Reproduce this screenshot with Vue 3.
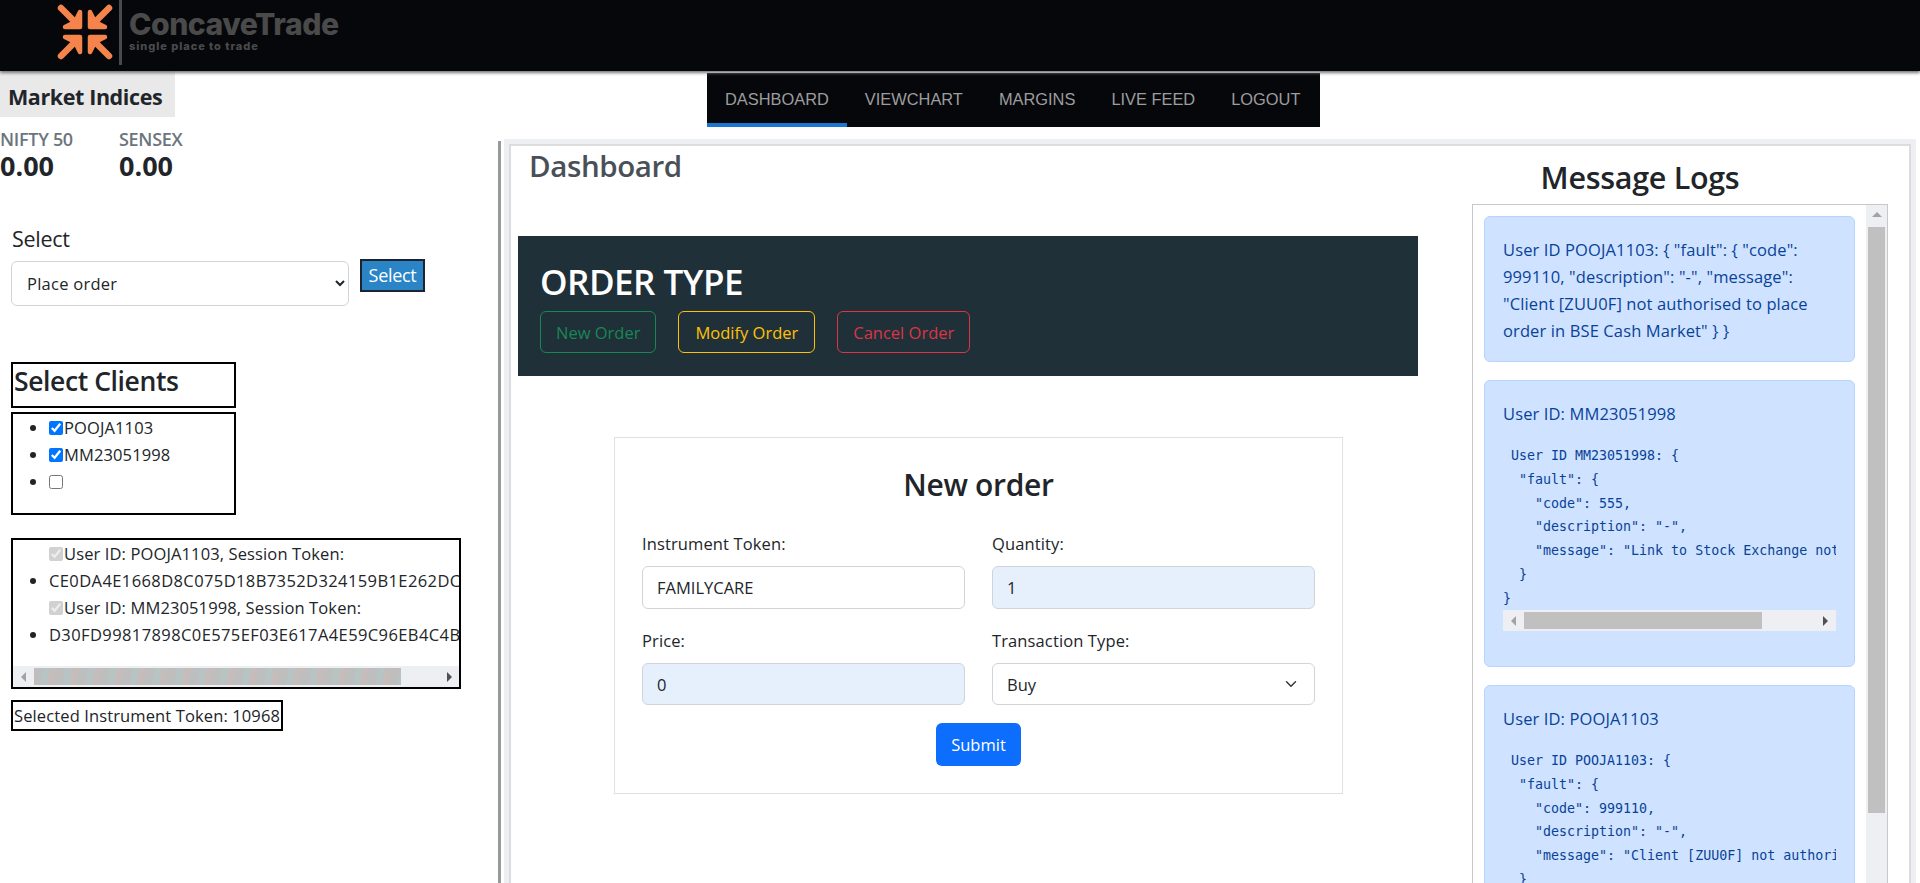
<template>
  <div class="page">
    <header class="topbar">
      <svg class="logo" width="56" height="56" viewBox="-28 -28 56 56">
        <g v-for="flip in arrowFlips" :key="flip" :transform="flip">
          <line x1="-24" y1="-24" x2="-11" y2="-11" stroke="#f5844c" stroke-width="6.5" stroke-linecap="round" />
          <path d="M-5 -20 L-5 -5 L-20 -5 L-10 -10 Z" fill="#f5844c" stroke="#f5844c" stroke-width="4.5" stroke-linejoin="round" />
        </g>
      </svg>
      <div class="logo-rule"></div>
      <div class="brand">
        <div class="brand-name">ConcaveTrade</div>
        <div class="brand-tag">single place to trade</div>
      </div>
    </header>

    <div class="content">
      <aside class="sidebar">
        <h2 class="indices-title">Market Indices</h2>
        <div class="indices">
          <div v-for="index in indices" :key="index.name" class="index">
            <div class="index-name">{{ index.name }}</div>
            <div class="index-value">{{ index.value }}</div>
          </div>
        </div>

        <div class="select-label">Select</div>
        <div class="select-row">
          <select class="action-select">
            <option>Place order</option>
          </select>
          <button class="select-btn">Select</button>
        </div>

        <h3 class="clients-title">Select Clients</h3>
        <ul class="clients">
          <li v-for="client in clients" :key="client.id">
            <input type="checkbox" :checked="client.checked" />{{ client.id }}
          </li>
        </ul>

        <div class="sessions">
          <div class="sessions-view">
            <ul>
              <template v-for="session in sessions" :key="session.id">
                <li class="session-user">
                  <input type="checkbox" checked disabled />User ID: {{ session.id }}, Session Token:
                </li>
                <li class="session-token">{{ session.token }}</li>
              </template>
            </ul>
          </div>
          <div class="hbar">
            <span class="arrow-left dim"></span>
            <div class="hbar-thumb noisy"></div>
            <span class="arrow-right"></span>
          </div>
        </div>

        <div class="selected-token">Selected Instrument Token: 10968</div>
      </aside>

      <main class="right">
        <nav class="tabs">
          <a v-for="(tab, i) in tabs" :key="tab" :class="{ active: i === 0 }">{{ tab }}</a>
        </nav>

        <div class="panel-wrap">
          <section class="panel">
            <div class="orders">
              <h1 class="dash-title">Dashboard</h1>
              <div class="order-type">
                <h2>ORDER TYPE</h2>
                <div class="order-btns">
                  <button class="new">New Order</button>
                  <button class="modify">Modify Order</button>
                  <button class="cancel">Cancel Order</button>
                </div>
              </div>

              <form class="order-form" @submit.prevent>
                <h3>New order</h3>
                <div class="fields">
                  <div class="field">
                    <label>Instrument Token:</label>
                    <input value="FAMILYCARE" />
                  </div>
                  <div class="field">
                    <label>Quantity:</label>
                    <input class="filled" value="1" />
                  </div>
                  <div class="field short">
                    <label>Price:</label>
                    <input class="filled" value="0" />
                  </div>
                  <div class="field short">
                    <label>Transaction Type:</label>
                    <select class="type-select">
                      <option>Buy</option>
                    </select>
                  </div>
                </div>
                <button class="submit">Submit</button>
              </form>
            </div>

            <div class="logs">
              <h2 class="logs-title">Message Logs</h2>
              <div class="logs-box">
                <div class="logs-view">
                  <div class="alert first">
                    User ID POOJA1103: { "fault": { "code": 999110, "description": "-", "message": "Client [ZUU0F] not authorised to place order in BSE Cash Market" } }
                  </div>
                  <div v-for="log in logs" :key="log.id" class="alert">
                    <div class="alert-user">User ID: {{ log.id }}</div>
                    <pre>{{ log.body }}</pre>
                    <div class="hbar log-bar">
                      <span class="arrow-left dim"></span>
                      <div class="hbar-thumb"></div>
                      <span class="arrow-right"></span>
                    </div>
                  </div>
                </div>
                <div class="vbar">
                  <span class="arrow-up"></span>
                  <div class="vbar-thumb"></div>
                </div>
              </div>
            </div>
          </section>
        </div>
      </main>
    </div>
  </div>
</template>

<script setup>
const arrowFlips = [
  "scale(1 1)",
  "scale(-1 1)",
  "scale(1 -1)",
  "scale(-1 -1)",
];

const indices = [
  { name: "NIFTY 50", value: "0.00" },
  { name: "SENSEX", value: "0.00" },
];

const clients = [
  { id: "POOJA1103", checked: true },
  { id: "MM23051998", checked: true },
  { id: "", checked: false },
];

const sessions = [
  { id: "POOJA1103", token: "CE0DA4E1668D8C075D18B7352D324159B1E262DC7A90F4E1B6C3D2" },
  { id: "MM23051998", token: "D30FD99817898C0E575EF03E617A4E59C96EB4C4B07D21E6A4F9C1" },
];

const tabs = ["Dashboard", "ViewChart", "Margins", "Live Feed", "Logout"];

function logBody(id, code, message) {
  return ` User ID ${id}: {
  "fault": {
    "code": ${code},
    "description": "-",
    "message": "${message}"
  }
}`;
}

const logs = [
  { id: "MM23051998", body: logBody("MM23051998", 555, "Link to Stock Exchange not available") },
  { id: "POOJA1103", body: logBody("POOJA1103", 999110, "Client [ZUU0F] not authorised to place order") },
];
</script>

<style>
html,
body {
  margin: 0;
  overflow: hidden;
  background: #fff;
}
</style>

<style scoped>
.page {
  height: 883px;
  overflow: hidden;
  font-family: "Open Sans", "Noto Sans", sans-serif;
  font-size: 16.5px;
  letter-spacing: 0.12px;
  line-height: 27px;
  color: #212529;
}

h1,
h2,
h3 {
  margin: 0;
}

/* header */
.topbar {
  height: 71px;
  background: #05070b;
  box-shadow: 0 2px 3px #777;
  display: flex;
  position: relative;
  z-index: 2;
}

.logo {
  margin: 4px 0 0 57px;
}

.logo-rule {
  width: 3px;
  height: 65px;
  margin-left: 6px;
  background: #4a4a4a;
}

.brand {
  margin: 8px 0 0 7px;
  color: #4a4a4a;
  font-family: "Inter", "Open Sans", sans-serif;
  font-weight: 800;
  letter-spacing: 0;
}

.brand-name {
  font-size: 30.2px;
  line-height: 32px;
  letter-spacing: -0.5px;
}

.brand-tag {
  font-size: 11px;
  line-height: 12px;
  letter-spacing: 0.95px;
}

.content {
  display: grid;
  grid-template-columns: 498px 1fr;
}

/* left column */
.sidebar {
  min-width: 0;
}

.indices-title {
  width: 175px;
  height: 46px;
  box-sizing: border-box;
  padding: 12px 0 0 8px;
  background: #e9e9e9;
  font-size: 21.5px;
  font-weight: 700;
  line-height: 28px;
  letter-spacing: -0.4px;
}

.indices {
  display: flex;
  gap: 46px;
  margin-top: 10px;
}

.index {
  min-width: 73px;
}

.index-name {
  color: #6c757d;
  font-size: 18px;
  font-weight: 600;
  line-height: 24px;
  letter-spacing: -0.3px;
}

.index-value {
  font-size: 27px;
  font-weight: 700;
  line-height: 30px;
  letter-spacing: 0;
}

.select-label {
  margin: 44px 0 0 12px;
  font-size: 21.5px;
  font-weight: 500;
  line-height: 28px;
  letter-spacing: -0.3px;
}

.select-row {
  display: flex;
  align-items: flex-start;
  gap: 11px;
  margin: 6px 0 0 11px;
  height: 47px;
}

.action-select {
  width: 338px;
  height: 45px;
  margin-top: 2px;
  padding: 0 11px;
  border: 1px solid #ced4da;
  border-radius: 6px;
  background-color: #fff;
  color: #212529;
  font: inherit;
  letter-spacing: 0.25px;
}

.select-btn {
  width: 65px;
  height: 33px;
  padding: 0;
  border: 2px solid #1b2430;
  background: #2a84c6;
  color: #fff;
  font: inherit;
  font-size: 18px;
  letter-spacing: -0.3px;
}

.clients-title,
.clients,
.sessions,
.selected-token {
  box-sizing: border-box;
  margin-left: 11px;
  border: 2px solid #000;
}

.clients-title {
  width: 225px;
  height: 46px;
  margin-top: 56px;
  padding-left: 1px;
  font-size: 26.5px;
  font-weight: 600;
  line-height: 34px;
  letter-spacing: -0.4px;
}

.clients {
  width: 225px;
  height: 103px;
  margin-top: 4px;
  margin-bottom: 0;
  padding: 0 0 0 36px;
}

.clients li,
.sessions li {
  height: 27px;
  white-space: nowrap;
}

input[type="checkbox"] {
  width: 14px;
  height: 14px;
  margin: 0 1px 0 0;
  vertical-align: -1px;
}

.sessions {
  width: 450px;
  height: 151px;
  margin-top: 23px;
  display: flex;
  flex-direction: column;
}

.sessions-view {
  flex: 1;
  min-height: 0;
  overflow: hidden;
}

.sessions ul {
  margin: 0;
  padding: 0 0 0 36px;
}

.session-user {
  list-style: none;
}

.session-token {
  letter-spacing: 0.4px;
}

.hbar {
  display: flex;
  align-items: center;
  height: 21px;
  flex-shrink: 0;
  background: #eeeff3;
}

.hbar-thumb {
  height: 17px;
  background: #c0c0c0;
}

.sessions .hbar-thumb {
  width: 367px;
  margin-left: 8px;
}

.noisy {
  background: repeating-linear-gradient(100deg, #bebebe 0 9px, #b8c4c4 9px 16px, #c6bcba 16px 22px);
}

.sessions .hbar {
  padding-left: 8px;
}

.sessions .arrow-right {
  margin-left: auto;
  margin-right: 7px;
}

.arrow-left,
.arrow-right {
  width: 0;
  height: 0;
  border-top: 5px solid transparent;
  border-bottom: 5px solid transparent;
}

.arrow-left {
  border-right: 5px solid #505050;
}

.arrow-right {
  border-left: 5px solid #505050;
}

.arrow-left.dim {
  border-right-color: #a3a3a3;
}

.selected-token {
  width: 272px;
  height: 31px;
  margin-top: 11px;
  padding-left: 1px;
  line-height: 27px;
  white-space: nowrap;
}

/* right column */
.right {
  min-width: 0;
}

.tabs {
  display: flex;
  width: 613px;
  height: 54px;
  margin: 2px 0 0 209px;
  background: #05070b;
  font-family: "Liberation Sans", Arial, sans-serif;
  font-size: 16.4px;
  letter-spacing: 0;
  text-transform: uppercase;
}

.tabs a {
  box-sizing: border-box;
  height: 54px;
  padding: 0 18px;
  color: #9d9d9d;
  line-height: 52px;
  border-bottom: 4px solid transparent;
}

.tabs a.active {
  border-bottom-color: #1976d2;
}

.panel-wrap {
  margin-top: 14px;
  padding: 3px 9px 0 8px;
  border-left: 3px solid #999;
}

.panel {
  display: flex;
  justify-content: space-between;
  height: 760px;
  padding: 0 21px 0 7px;
  border: 2px solid #dcdcdc;
  box-shadow: 0 0 0 5px #eeeff3;
}

.orders {
  width: 900px;
}

.dash-title {
  height: 90px;
  padding: 1px 0 0 11px;
  box-sizing: border-box;
  color: #495057;
  font-size: 29.5px;
  font-weight: 600;
  line-height: 38px;
  letter-spacing: -0.4px;
}

.order-type {
  height: 140px;
  box-sizing: border-box;
  padding: 24px 22px 0;
  background: #1f3039;
}

.order-type h2 {
  color: #fff;
  font-size: 35px;
  font-weight: 600;
  line-height: 44px;
  letter-spacing: -0.5px;
}

.order-btns {
  display: flex;
  gap: 22px;
  margin-top: 7px;
}

.order-btns button {
  height: 42px;
  padding: 0 15px;
  background: transparent;
  border: 1px solid;
  border-radius: 6px;
  font: inherit;
}

.new {
  color: #198754;
  border-color: #198754;
}

.order-btns .modify {
  padding: 0 16px;
  color: #ffc107;
  border-color: #ffc107;
}

.cancel {
  color: #dc3545;
  border-color: #dc3545;
}

.order-form {
  width: 729px;
  height: 357px;
  box-sizing: border-box;
  margin: 61px 0 0 96px;
  padding: 28px 27px 0;
  border: 1px solid #e0e0e0;
  text-align: center;
}

.order-form h3 {
  font-size: 30px;
  font-weight: 600;
  line-height: 38px;
  letter-spacing: -0.3px;
}

.fields {
  display: grid;
  grid-template-columns: 323px 323px;
  column-gap: 27px;
  row-gap: 20px;
  margin-top: 28px;
  text-align: left;
}

.field label {
  display: block;
  margin-bottom: 10px;
  line-height: 24px;
}

.field input,
.type-select {
  display: block;
  width: 100%;
  height: 43px;
  box-sizing: border-box;
  padding: 0 14px;
  border: 1px solid #ced4da;
  border-radius: 6px;
  background-color: #fff;
  color: #212529;
  font: inherit;
}

.field.short input,
.field.short .type-select {
  height: 42px;
}

.field input.filled {
  background-color: #e6f0fd;
}

.type-select {
  appearance: none;
  background-image: url("data:image/svg+xml,%3csvg xmlns='http://www.w3.org/2000/svg' viewBox='0 0 16 16'%3e%3cpath fill='none' stroke='%23343a40' stroke-linecap='round' stroke-linejoin='round' stroke-width='2' d='m2 5 6 6 6-6'/%3e%3c/svg%3e");
  background-repeat: no-repeat;
  background-position: right 15px center;
  background-size: 16px 12px;
}

.submit {
  width: 85px;
  height: 43px;
  margin-top: 18px;
  padding: 0;
  border: 0;
  border-radius: 6px;
  background: #0d6efd;
  color: #fff;
  font: inherit;
}

.logs {
  width: 416px;
}

.logs-title {
  margin-top: 11px;
  margin-bottom: 3px;
  padding-right: 80px;
  height: 44px;
  text-align: center;
  font-size: 30.5px;
  font-weight: 600;
  line-height: 40px;
  letter-spacing: -0.3px;
  white-space: nowrap;
}

.logs-box {
  display: flex;
  height: 700px;
  border: 1px solid #c8c8c8;
}

.logs-view {
  flex: 1;
  min-width: 0;
  padding: 11px 11px 0;
  overflow: hidden;
}

.alert {
  padding: 19px 18px 18px;
  margin-bottom: 18px;
  background: #cfe2ff;
  border: 1px solid #b6d4fe;
  border-radius: 6px;
  color: #084298;
}

.alert.first {
  padding-bottom: 17px;
}

.alert-user {
  margin-bottom: 17px;
}

.alert pre {
  margin: 0;
  height: 166px;
  overflow: hidden;
  font-family: "DejaVu Sans Mono", "Liberation Mono", monospace;
  font-size: 13.3px;
  line-height: 23.8px;
  letter-spacing: 0;
}

.log-bar {
  margin-bottom: 17px;
  padding: 0 8px;
}

.log-bar .hbar-thumb {
  width: 238px;
  margin-left: 8px;
}

.log-bar .arrow-right {
  margin-left: auto;
}

.vbar {
  width: 21px;
  flex-shrink: 0;
  background: #eeeff3;
  display: flex;
  flex-direction: column;
  align-items: center;
}

.arrow-up {
  width: 0;
  height: 0;
  margin: 7px 0 10px;
  border-left: 5px solid transparent;
  border-right: 5px solid transparent;
  border-bottom: 5px solid #a3a3a3;
}

.vbar-thumb {
  width: 17px;
  height: 586px;
  background: #c0c0c0;
}
</style>
